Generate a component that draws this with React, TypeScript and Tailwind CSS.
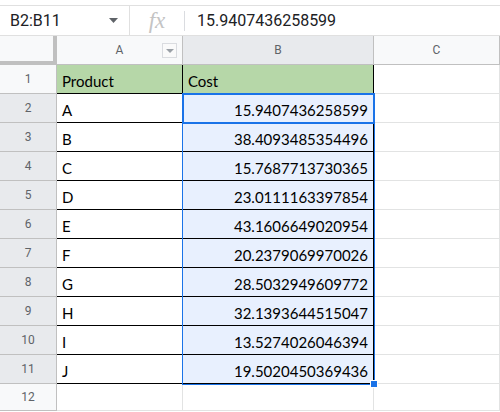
import React from "react";

const data: [string, string][] = [
  ["A", "15.9407436258599"],
  ["B", "38.4093485354496"],
  ["C", "15.7687713730365"],
  ["D", "23.0111163397854"],
  ["E", "43.1606649020954"],
  ["F", "20.2379069970026"],
  ["G", "28.5032949609772"],
  ["H", "32.1393644515047"],
  ["I", "13.5274026046394"],
  ["J", "19.5020450369436"],
];

const cellFont = { fontFamily: "Lato, 'Open Sans', sans-serif" };

function RowHeader({ n, selected, last }: { n: number; selected: boolean; last?: boolean }) {
  return (
    <div
      className={`${last ? "h-[27px]" : "h-[29px]"} flex items-center justify-center border-r border-b border-[#c0c0c0] text-[12px] text-[#5f6368] ${
        selected ? "bg-[#e8eaed]" : "bg-[#f8f9fa]"
      }`}
    >
      {n}
    </div>
  );
}

export default function App() {
  return (
    <div
      className="w-[500px] h-[412px] overflow-hidden bg-white"
      style={{ fontFamily: "Roboto, 'Liberation Sans', Arial, sans-serif" }}
    >
      <div className="h-[6px] border-b border-[#e0e0e0]" />
      {/* formula bar */}
      <div className="h-[30px] flex border-b border-[#e0e0e0]">
        <div className="w-[130px] flex items-center pl-[10px] pr-[10px] justify-between border-r border-[#e0e0e0]">
          <span className="text-[16px] text-[#202124]">B2:B11</span>
          <svg width="9" height="5" viewBox="0 0 9 5" className="mr-[1px]">
            <polygon points="0,0 9,0 4.5,5" fill="#5f6368" />
          </svg>
        </div>
        <div className="w-[54px] flex items-center justify-center">
          <span
            className="text-[23px] italic text-[#c4c4c4] leading-none"
            style={{ fontFamily: "'Liberation Serif', 'DejaVu Serif', serif" }}
          >
            fx
          </span>
        </div>
        <div className="w-px h-[20px] self-center bg-[#dadce0]" />
        <div className="flex items-center pl-[12px] text-[16px] text-[#202124]">15.9407436258599</div>
      </div>

      {/* grid */}
      <div className="relative grid grid-cols-[57px_126px_191px_126px]">
        {/* header row */}
        <div className="h-[29px] bg-[#f8f9fa] border-r-4 border-b-4 border-[#c0c0c0]" />
        <div className="relative h-[29px] flex items-center justify-center bg-[#f8f9fa] border-r border-b border-[#c0c0c0] text-[12px] text-[#5f6368]">
          A
          <div className="absolute right-[5px] top-[7px] w-[15px] h-[15px] border border-[#dadce0] bg-[#fafafa] flex items-center justify-center">
            <svg width="8" height="4" viewBox="0 0 8 4">
              <polygon points="0,0 8,0 4,4" fill="#9aa0a6" />
            </svg>
          </div>
        </div>
        <div className="h-[29px] flex items-center justify-center bg-[#e8eaed] border-r border-b border-[#c0c0c0] text-[12px] text-[#5f6368]">
          B
        </div>
        <div className="h-[29px] flex items-center justify-center bg-[#f8f9fa] border-r border-b border-[#c0c0c0] text-[12px] text-[#5f6368]">
          C
        </div>

        {/* row 1 */}
        <RowHeader n={1} selected={false} />
        <div
          className="h-[29px] flex items-end pb-[3px] pl-[5px] bg-[#b6d7a8] border-r border-b border-black text-[15px] leading-[18px] text-black"
          style={cellFont}
        >
          Product
        </div>
        <div
          className="h-[29px] flex items-end pb-[3px] pl-[5px] bg-[#b6d7a8] border-r border-b border-black text-[15px] leading-[18px] text-black"
          style={cellFont}
        >
          Cost
        </div>
        <div className="h-[29px] border-r border-b border-[#e2e3e3]" />

        {data.map(([p, c], i) => (
          <React.Fragment key={p}>
            <RowHeader n={i + 2} selected={true} />
            <div
              className="h-[29px] flex items-end pb-[3px] pl-[5px] bg-white border-r border-b border-black text-[15px] leading-[18px] text-black"
              style={cellFont}
            >
              {p}
            </div>
            <div
              className="h-[29px] flex items-end justify-end pb-[3px] pr-[5px] bg-[#e8f0fe] border-r border-b border-black text-[15px] leading-[18px] text-black"
              style={cellFont}
            >
              {c}
            </div>
            <div className="h-[29px] border-r border-b border-[#e2e3e3]" />
          </React.Fragment>
        ))}

        {/* row 12 */}
        <RowHeader n={12} selected={false} last />
        <div className="h-[27px] border-r border-b border-[#e2e3e3]" />
        <div className="h-[27px] border-r border-b border-[#e2e3e3]" />
        <div className="h-[27px] border-r border-b border-[#e2e3e3]" />

        {/* selection range overlay */}
        <div className="absolute left-[182px] top-[57px] w-[193px] h-[292px] border border-[#1a73e8] pointer-events-none" />
        {/* active cell */}
        <div className="absolute left-[182px] top-[57px] w-[193px] h-[31px] border-2 border-[#1a73e8] pointer-events-none" />
        {/* fill handle */}
        <div className="absolute left-[370px] top-[344px] w-[8px] h-[8px] bg-[#1a73e8] border border-white" />
      </div>
    </div>
  );
}
